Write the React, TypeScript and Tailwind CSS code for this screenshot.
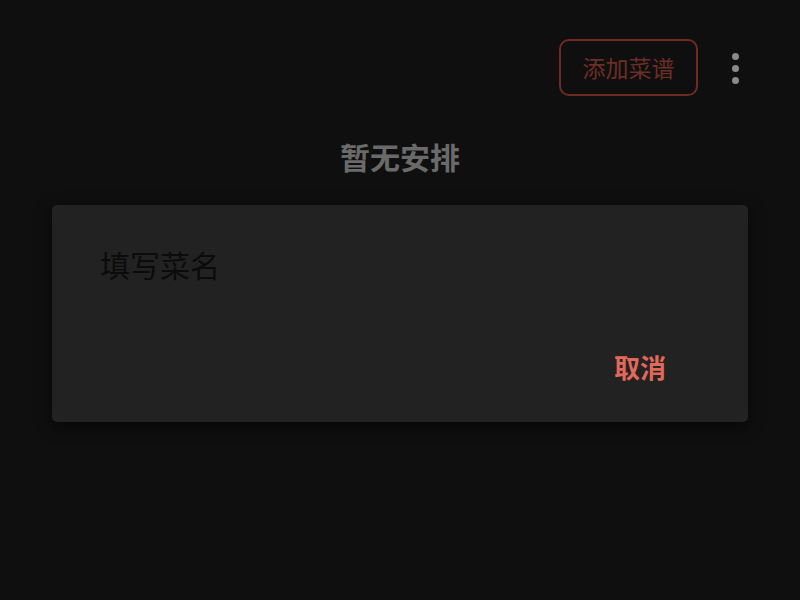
import React from 'react';

const App: React.FC = () => {
  return (
    <div
      className="w-[800px] h-[600px] bg-[#0f0f0f] overflow-hidden flex flex-col"
      style={{ fontFamily: '"Noto Sans CJK SC", "Noto Sans", sans-serif' }}
    >
      <div className="flex items-center justify-end pt-[39px] pr-[61px] gap-[34px]">
        <button className="w-[139px] h-[57px] rounded-[10px] border-2 border-[#6f2a22] text-[#6b2e26] text-[23px] flex items-center justify-center">
          添加菜谱
        </button>
        <div className="flex flex-col gap-[5px] items-center pt-[1px]">
          <span className="w-[7px] h-[7px] rounded-full bg-[#8a8a8a]" />
          <span className="w-[7px] h-[7px] rounded-full bg-[#8a8a8a]" />
          <span className="w-[7px] h-[7px] rounded-full bg-[#8a8a8a]" />
        </div>
      </div>

      <div className="text-center text-[30px] font-bold text-[#6a6a6a] mt-[40px] leading-[40px]">
        暂无安排
      </div>

      <div className="mx-[52px] mt-[29px] h-[217px] bg-[#222222] rounded-[5px] shadow-[0_4px_16px_rgba(0,0,0,0.6)] flex flex-col">
        <div className="pl-[48px] pt-[39px] text-[30px] text-[#0b0b0b] leading-[40px]">
          填写菜名
        </div>
        <div className="flex justify-end pr-[82px] mt-[66px]">
          <span className="text-[26px] font-bold text-[#e0695b] leading-[34px]">取消</span>
        </div>
      </div>
    </div>
  );
};

export default App;
